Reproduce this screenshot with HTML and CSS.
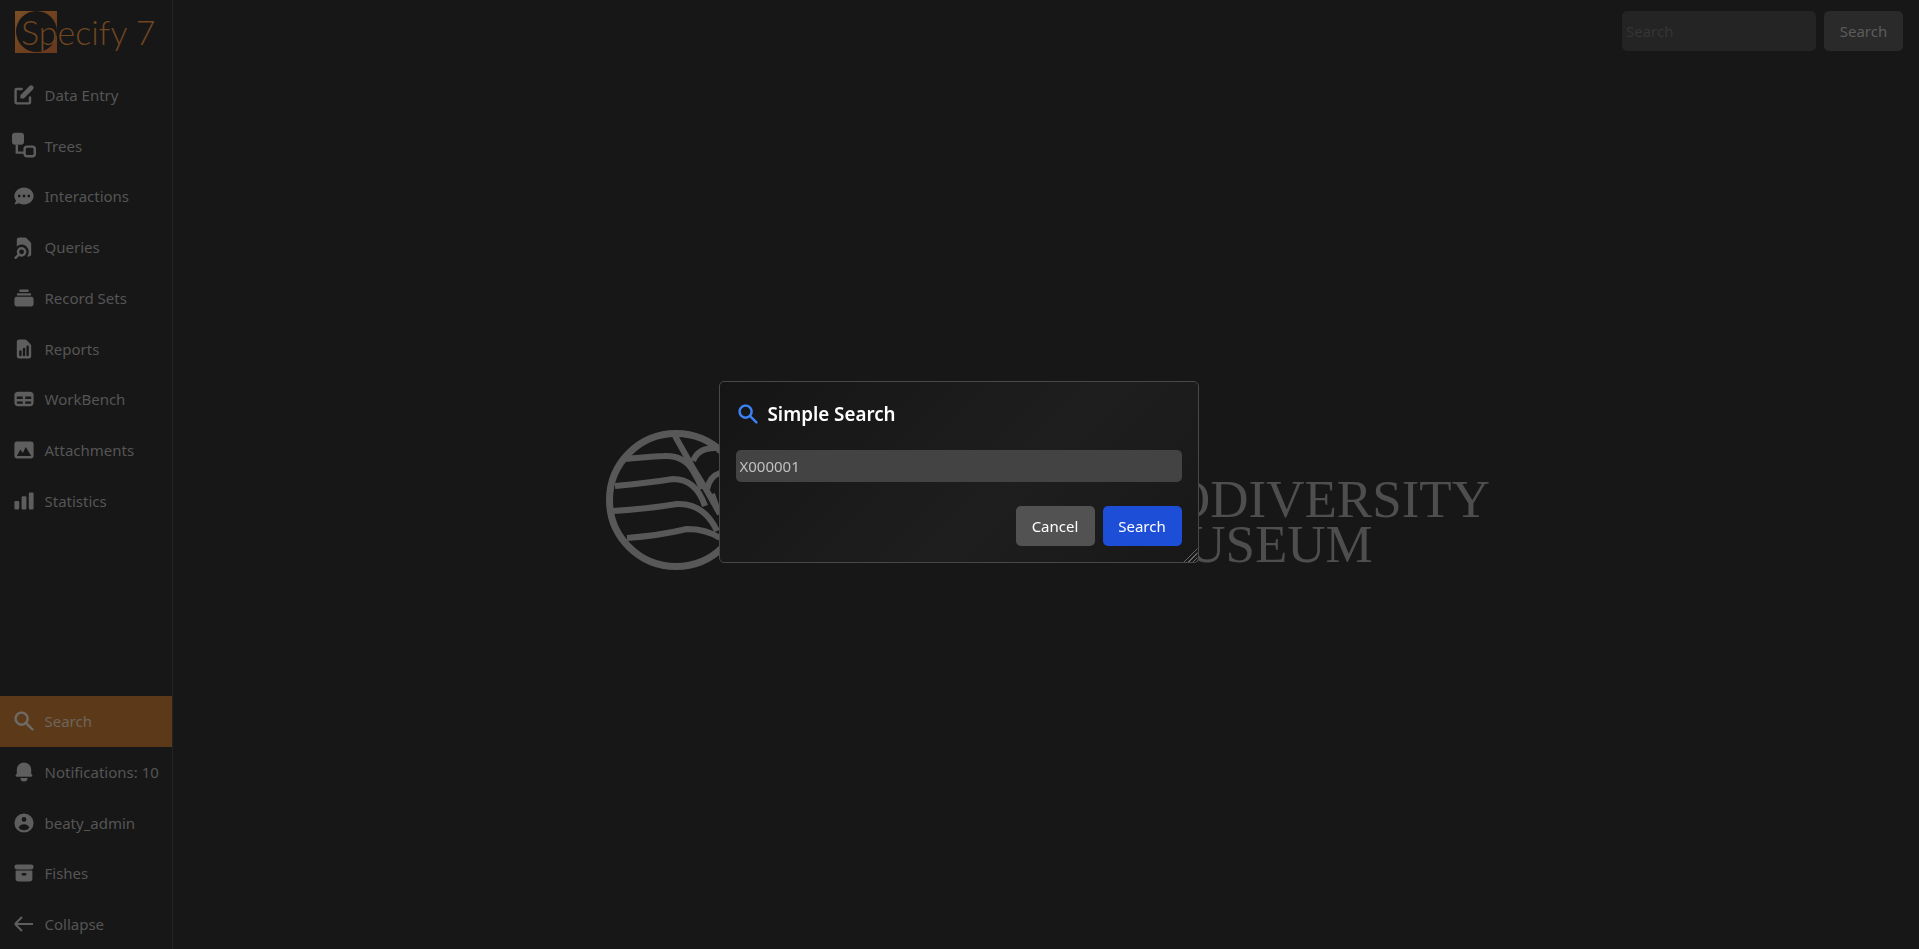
FILE: index.html
```html
<!DOCTYPE html>
<html lang="en">
<head>
    <meta charset="UTF-8">
    <title>Specify 7</title>
    <link rel="stylesheet" href="styles.css">
</head>
<body>
    <aside class="sidebar">
        <div class="brand">
            <div class="brand-mark"><div class="brand-circle"></div></div>
            <span class="brand-name">Specify 7</span>
        </div>
        <nav class="nav-top">
            <a class="nav-item"><svg viewBox="0 0 20 20"><path d="M17.414 2.586a2 2 0 00-2.828 0L7 10.172V13h2.828l7.586-7.586a2 2 0 000-2.828z"/><path fill-rule="evenodd" d="M2 6a2 2 0 012-2h4a1 1 0 010 2H4v10h10v-4a1 1 0 112 0v4a2 2 0 01-2 2H4a2 2 0 01-2-2V6z"/></svg>Data Entry</a>
            <a class="nav-item"><svg viewBox="0 0 20 20"><rect x="0" y="-1" width="10" height="10" rx="2.500"/><path class="line" d="M4 9v6.500h6"/><rect class="line" x="10.500" y="10.500" width="8.500" height="8" rx="2"/></svg>Trees</a>
            <a class="nav-item"><svg viewBox="0 0 20 20"><path fill-rule="evenodd" d="M18 10c0 3.866-3.582 7-8 7a8.841 8.841 0 01-4.083-.98L2 17l1.338-3.123C2.493 12.767 2 11.434 2 10c0-3.866 3.582-7 8-7s8 3.134 8 7zM7 9H5v2h2V9zm8 0h-2v2h2V9zM9 9h2v2H9V9z"/></svg>Interactions</a>
            <a class="nav-item"><svg viewBox="0 0 20 20"><path d="M4 4a2 2 0 012-2h4.586A2 2 0 0112 2.586L15.414 6A2 2 0 0116 7.414V16a2 2 0 01-2 2h-1.528A6 6 0 004 9.528V4z"/><path fill-rule="evenodd" d="M8 10a4 4 0 00-3.446 6.032l-2.261 2.260a1 1 0 101.414 1.415l2.261-2.261A4 4 0 108 10zm-2 4a2 2 0 114 0 2 2 0 01-4 0z"/></svg>Queries</a>
            <a class="nav-item"><svg viewBox="0 0 20 20"><path d="M7 3a1 1 0 000 2h6a1 1 0 100-2H7zM4 7a1 1 0 011-1h10a1 1 0 110 2H5a1 1 0 01-1-1zM2 11a2 2 0 012-2h12a2 2 0 012 2v4a2 2 0 01-2 2H4a2 2 0 01-2-2v-4z"/></svg>Record Sets</a>
            <a class="nav-item"><svg viewBox="0 0 20 20"><path fill-rule="evenodd" d="M6 2a2 2 0 00-2 2v12a2 2 0 002 2h8a2 2 0 002-2V7.414A2 2 0 0015.414 6L12 2.586A2 2 0 0010.586 2H6zm2 10a1 1 0 10-2 0v3a1 1 0 102 0v-3zm2-3a1 1 0 011 1v5a1 1 0 11-2 0v-5a1 1 0 011-1zm4-1a1 1 0 10-2 0v7a1 1 0 102 0V8z"/></svg>Reports</a>
            <a class="nav-item"><svg viewBox="0 0 20 20"><path fill-rule="evenodd" d="M5 4a3 3 0 00-3 3v6a3 3 0 003 3h10a3 3 0 003-3V7a3 3 0 00-3-3H5zm-1 9v-1h5v2H5a1 1 0 01-1-1zm7 1h4a1 1 0 001-1v-1h-5v2zm0-4h5V8h-5v2zM9 8H4v2h5V8z"/></svg>WorkBench</a>
            <a class="nav-item"><svg viewBox="0 0 20 20"><path fill-rule="evenodd" d="M4 3a2 2 0 00-2 2v10a2 2 0 002 2h12a2 2 0 002-2V5a2 2 0 00-2-2H4zm12 12H4l3-5.500 2 3 2.500-5 4.500 7.500z"/></svg>Attachments</a>
            <a class="nav-item"><svg viewBox="0 0 20 20"><path d="M2 11a1 1 0 011-1h2a1 1 0 011 1v5a1 1 0 01-1 1H3a1 1 0 01-1-1v-5zM8 7a1 1 0 011-1h2a1 1 0 011 1v9a1 1 0 01-1 1H9a1 1 0 01-1-1V7zM14 4a1 1 0 011-1h2a1 1 0 011 1v12a1 1 0 01-1 1h-2a1 1 0 01-1-1V4z"/></svg>Statistics</a>
        </nav>
        <nav class="nav-bottom">
            <a class="nav-item active"><svg viewBox="0 0 20 20"><path fill-rule="evenodd" d="M8 4a4 4 0 100 8 4 4 0 000-8zM2 8a6 6 0 1110.89 3.476l4.817 4.817a1 1 0 01-1.414 1.414l-4.816-4.816A6 6 0 012 8z"/></svg>Search</a>
            <a class="nav-item"><svg viewBox="0 0 20 20"><path d="M10 2a6 6 0 00-6 6v3.586l-.707.707A1 1 0 004 14h12a1 1 0 00.707-1.707L16 11.586V8a6 6 0 00-6-6zM10 18a3 3 0 01-3-3h6a3 3 0 01-3 3z"/></svg>Notifications: 10</a>
            <a class="nav-item"><svg viewBox="0 0 20 20"><path fill-rule="evenodd" d="M18 10a8 8 0 11-16 0 8 8 0 0116 0zm-6-3a2 2 0 11-4 0 2 2 0 014 0zm-2 4a5 5 0 00-4.546 2.916A5.986 5.986 0 0010 16a5.986 5.986 0 004.546-2.084A5 5 0 0010 11z"/></svg>beaty_admin</a>
            <a class="nav-item"><svg viewBox="0 0 20 20"><path d="M4 3a2 2 0 100 4h12a2 2 0 100-4H4z"/><path fill-rule="evenodd" d="M3 8h14v7a2 2 0 01-2 2H5a2 2 0 01-2-2V8zm5 3a1 1 0 011-1h2a1 1 0 110 2H9a1 1 0 01-1-1z"/></svg>Fishes</a>
            <a class="nav-item"><svg viewBox="0 0 24 24"><path class="line" d="M10 19l-7-7m0 0l7-7m-7 7h18"/></svg>Collapse</a>
        </nav>
    </aside>

    <main class="content">
        <header class="top-bar">
            <input class="top-search" type="text" placeholder="Search">
            <button class="top-button" type="button">Search</button>
        </header>
        <section class="splash">
            <svg class="splash-mark" viewBox="0 0 140 142">
                <circle class="splash-ring" cx="70" cy="71" r="66.500"/>
                <path d="M69 7L87 39L101 62L114 85"/>
                <path d="M87 32Q92 19 109 19"/>
                <path d="M101 60Q104 47 114 44"/>
                <path d="M106 65L112 82"/>
                <path d="M19 30Q51 27 58 27Q78 26 87 42Q92 50 96 60"/>
                <path d="M9 57Q41 54 67 50Q90 50 99 77"/>
                <path d="M7 82Q41 80 71 75Q98 74 111 102"/>
                <path d="M21 109Q51 107 81 100Q100 100 114 109"/>
            </svg>
            <div class="splash-text">BIODIVERSITY<br><span class="splash-line">MUSEUM</span></div>
        </section>
    </main>

    <div class="overlay">
        <div class="dialog">
            <div class="dialog-title">
                <svg viewBox="0 0 20 20"><path fill-rule="evenodd" d="M8 4a4 4 0 100 8 4 4 0 000-8zM2 8a6 6 0 1110.89 3.476l4.817 4.817a1 1 0 01-1.414 1.414l-4.816-4.816A6 6 0 012 8z"/></svg>
                <h2>Simple Search</h2>
            </div>
            <input class="dialog-input" type="text" value="X000001">
            <div class="dialog-buttons">
                <button class="btn btn-cancel" type="button">Cancel</button>
                <button class="btn btn-search" type="button">Search</button>
            </div>
            <div class="resize-handle"></div>
        </div>
    </div>
</body>
</html>
```

FILE: styles.css
```css
* {
    box-sizing: border-box;
}

body {
    margin: 0;
    height: 949px;
    display: flex;
    overflow: hidden;
    background-color: #171717;
    font-family: "Noto Sans", sans-serif;
    font-size: 15px;
    color: #555;
}

svg {
    fill: currentColor;
    flex-shrink: 0;
    overflow: visible;
}

svg .line {
    fill: none;
    stroke: currentColor;
    stroke-width: 2;
}

.sidebar {
    width: 173px;
    display: flex;
    flex-direction: column;
    border-right: 1px solid #232323;
}

.brand {
    height: 69.5px;
    padding: 11px 0 0 15px;
    display: flex;
    align-items: flex-start;
}

.brand-mark {
    width: 42px;
    height: 42px;
    overflow: hidden;
    background: linear-gradient(135deg, #7a5026, #6e3f1e 60%, #683820);
}

.brand-circle {
    width: 41px;
    height: 41px;
    margin-left: 1px;
    border-radius: 50%;
    background-color: #171717;
}

.brand-name {
    margin: -4px 0 0 -36px;
    font-family: "Lato", sans-serif;
    font-size: 34px;
    font-weight: 300;
    line-height: 50px;
    white-space: nowrap;
    color: #6f4620;
    position: relative;
}

.nav-top {
    flex: 1;
}

.nav-item {
    height: 50.75px;
    display: flex;
    align-items: center;
    gap: 8.5px;
    padding-left: 12px;
    white-space: nowrap;
}

.nav-bottom .nav-item {
    height: 50.6px;
}

.nav-item svg {
    width: 24px;
    height: 24px;
    color: #5e5e5e;
}

.nav-item.active {
    background-color: #5c3a19;
    color: #6e655c;
}

.nav-item.active svg {
    color: #6e6a64;
}

.content {
    flex: 1;
    display: flex;
    flex-direction: column;
}

.top-bar {
    height: 62px;
    display: flex;
    justify-content: flex-end;
    gap: 8px;
    padding: 11px 16px 0 0;
}

.top-search {
    width: 194px;
    height: 40px;
    padding: 0 4px;
    border: none;
    border-radius: 5px;
    background-color: #242424;
    font: inherit;
}

.top-search::placeholder {
    color: #353535;
}

.top-button {
    width: 79px;
    height: 40px;
    border: none;
    border-radius: 5px;
    background-color: #2a2a2a;
    color: #5c5c5c;
    font: inherit;
}

.splash {
    flex: 1;
    display: flex;
    justify-content: center;
    align-items: center;
    gap: 373px;
    padding-bottom: 12px;
    padding-left: 4px;
}

.splash-mark {
    width: 140px;
    height: 142px;
    fill: none;
    stroke: #585858;
    stroke-width: 6;
}

.splash-ring {
    stroke-width: 7;
}

.splash-text {
    padding-top: 45px;
    font-family: "Liberation Serif", serif;
    font-size: 53px;
    line-height: 45.5px;
    color: #4e4e4e;
    white-space: nowrap;
}

.splash-line {
    margin-left: 21px;
}

.overlay {
    position: fixed;
    inset: 0;
    display: flex;
    align-items: center;
    justify-content: center;
    padding: 0 2px 5px 0;
}

.dialog {
    position: relative;
    width: 480px;
    height: 182px;
    padding: 16px;
    border: 1px solid #484848;
    border-radius: 5px;
    background: linear-gradient(135deg, #151515, #1e1e1e 60%, #181818);
    display: flex;
    flex-direction: column;
}

.dialog-title {
    display: flex;
    align-items: center;
    gap: 8px;
    height: 32px;
    color: #3b82f6;
}

.dialog-title svg {
    width: 24px;
    height: 24px;
}

.dialog-title h2 {
    margin: 0;
    font-size: 18.8px;
    font-weight: 600;
    color: #fff;
}

.dialog-input {
    margin-top: 20px;
    height: 33px;
    padding: 0 4px;
    border: none;
    border-radius: 5px;
    background-color: #434343;
    color: #c0c0c0;
    font: inherit;
}

.dialog-buttons {
    display: flex;
    justify-content: flex-end;
    gap: 8px;
    margin-top: 24px;
}

.btn {
    width: 79px;
    height: 40px;
    border: none;
    border-radius: 5px;
    color: #fff;
    font: inherit;
}

.btn-cancel {
    background-color: #525252;
}

.btn-search {
    background-color: #1d4ed8;
}

.resize-handle {
    position: absolute;
    right: 0;
    bottom: 0;
    width: 15px;
    height: 15px;
    background: repeating-linear-gradient(135deg, transparent 0, transparent 2px, #666 2px, #666 3px);
    clip-path: polygon(100% 0, 100% 100%, 0 100%);
}
```
